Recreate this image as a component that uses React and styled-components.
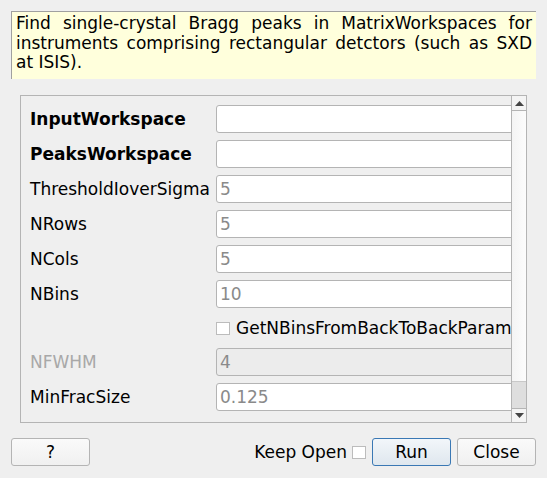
import React from "react";
import styled, { createGlobalStyle } from "styled-components";

const Global = createGlobalStyle`
  html, body { margin: 0; padding: 0; background: #efefef; }
  body { font-family: "DejaVu Sans", "Liberation Sans", sans-serif; font-size: 17px; color: #000; }
  * { box-sizing: border-box; }
`;

const Window = styled.div`
  width: 547px;
  height: 478px;
  background: #efefef;
  padding: 11px 11px 0 11px;
  display: flex;
  flex-direction: column;
  overflow: hidden;
`;

const Description = styled.div`
  height: 68px;
  background: #ffffdc;
  border-top: 1px solid #a0a0a0;
  border-left: 1px solid #a0a0a0;
  padding: 2px 4px 0 4px;
  line-height: 19.5px;
  text-align: justify;
  font-size: 17px;
`;

const ScrollArea = styled.div`
  margin: 16px 9px 0 9px;
  height: 328px;
  border: 1px solid #b4b4b4;
  display: flex;
  overflow: hidden;
`;

const Content = styled.div`
  flex: 1;
  overflow: hidden;
  padding: 9px 0 0 9px;
  display: flex;
  flex-direction: column;
  gap: 7px;
`;

const Row = styled.div`
  display: flex;
  align-items: center;
  height: ${(p) => (p.$short ? 26 : 28)}px;
  flex-shrink: 0;
`;

const Label = styled.div`
  width: 186px;
  flex-shrink: 0;
  white-space: nowrap;
  font-weight: ${(p) => (p.$bold ? "bold" : "normal")};
  color: ${(p) => (p.$disabled ? "#a8a8a8" : "#000")};
`;

const Input = styled.div`
  width: 320px;
  flex-shrink: 0;
  height: 28px;
  border: 1px solid #b4b4b4;
  border-radius: 3px;
  background: ${(p) => (p.$disabled ? "#ececec" : "#fff")};
  color: #8a8a8a;
  padding: 0 3px;
  display: flex;
  align-items: center;
  line-height: 1;
`;

const CheckRow = styled.div`
  display: flex;
  align-items: center;
  gap: 6px;
  white-space: nowrap;
`;

const Box = styled.span`
  display: inline-block;
  width: 14px;
  height: 13px;
  border: 1px solid #bcbcbc;
  background: #fff;
  flex-shrink: 0;
`;

const Scrollbar = styled.div`
  width: 15px;
  flex-shrink: 0;
  border-left: 1px solid #b4b4b4;
  display: flex;
  flex-direction: column;
  background: linear-gradient(to right, #f4f4f4, #fcfcfc);
`;

const Arrow = styled.div`
  height: ${(p) => p.$h}px;
  display: flex;
  align-items: center;
  justify-content: center;
  background: #f4f4f4;
  border-${(p) => (p.$up ? "bottom" : "top")}: 1px solid #b4b4b4;
`;

const Track = styled.div`
  flex: 1;
`;

const Handle = styled.div`
  height: 27px;
  background: #dedede;
  border-top: 1px solid #c8c8c8;
`;

const Footer = styled.div`
  margin-top: 15px;
  display: flex;
  align-items: center;
  height: 28px;
`;

const Button = styled.div`
  width: 79px;
  height: 28px;
  border: 1px solid ${(p) => (p.$primary ? "#3a78b4" : "#b4b4b4")};
  border-radius: 3px;
  background: ${(p) =>
    p.$primary
      ? "linear-gradient(#f2f6fa, #dfe7ee)"
      : "linear-gradient(#fafafa, #f0f0f0)"};
  display: flex;
  align-items: center;
  justify-content: center;
  margin-left: ${(p) => p.$ml || 0}px;
`;

const Spacer = styled.div`
  flex: 1;
`;

const KeepOpen = styled.div`
  display: flex;
  align-items: center;
  gap: 5px;
`;

const Tri = ({ up }) => (
  <svg width="9" height="5" viewBox="0 0 9 5">
    <path d={up ? "M0 5 L4.5 0 L9 5 Z" : "M0 0 L4.5 5 L9 0 Z"} fill="#444" />
  </svg>
);

const rows = [
  { label: "InputWorkspace", bold: true, value: "" },
  { label: "PeaksWorkspace", bold: true, value: "" },
  { label: "ThresholdIoverSigma", value: "5" },
  { label: "NRows", value: "5" },
  { label: "NCols", value: "5" },
  { label: "NBins", value: "10" },
];

export default function App() {
  return (
    <>
      <Global />
      <Window>
        <Description>
          Find single-crystal Bragg peaks in MatrixWorkspaces for instruments
          comprising rectangular detctors (such as SXD at ISIS).
        </Description>
        <ScrollArea>
          <Content>
            {rows.map((r) => (
              <Row key={r.label}>
                <Label $bold={r.bold}>{r.label}</Label>
                <Input>{r.value}</Input>
              </Row>
            ))}
            <Row $short>
              <Label />
              <CheckRow>
                <Box />
                GetNBinsFromBackToBackParams
              </CheckRow>
            </Row>
            <Row>
              <Label $disabled>NFWHM</Label>
              <Input $disabled>4</Input>
            </Row>
            <Row>
              <Label>MinFracSize</Label>
              <Input>0.125</Input>
            </Row>
          </Content>
          <Scrollbar>
            <Arrow $up $h={15}>
              <Tri up />
            </Arrow>
            <Track />
            <Handle />
            <Arrow $h={14}>
              <Tri />
            </Arrow>
          </Scrollbar>
        </ScrollArea>
        <Footer>
          <Button>?</Button>
          <Spacer />
          <KeepOpen>
            Keep Open
            <Box />
          </KeepOpen>
          <Button $primary $ml={6}>Run</Button>
          <Button $ml={6}>Close</Button>
        </Footer>
      </Window>
    </>
  );
}
